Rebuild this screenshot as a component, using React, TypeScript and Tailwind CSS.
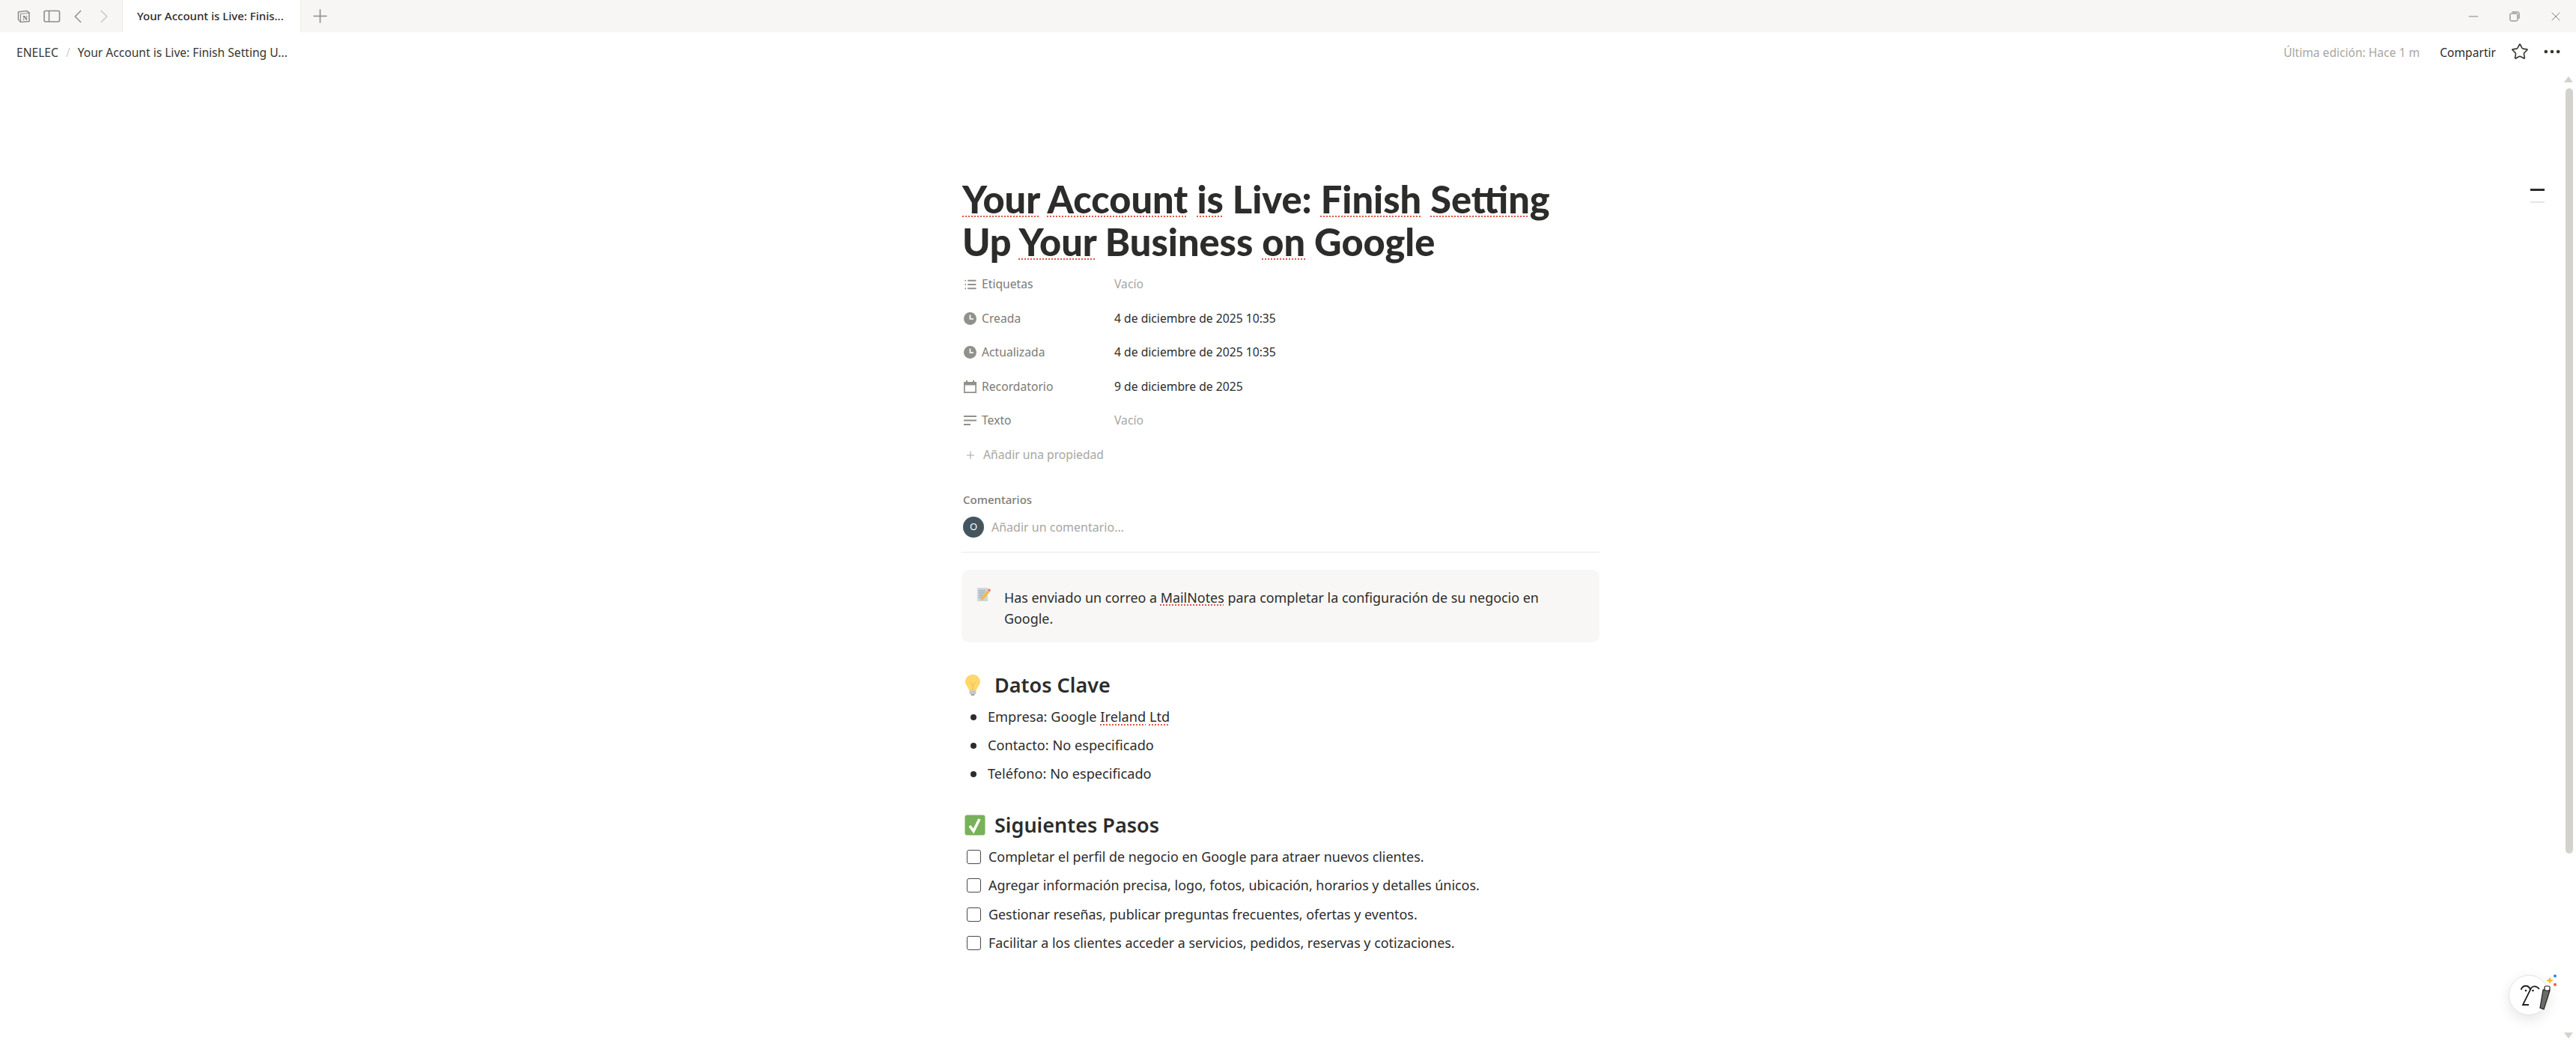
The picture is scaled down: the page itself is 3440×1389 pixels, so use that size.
import { List, Plus, Star, ChevronLeft, ChevronRight, Minus, X, MoreHorizontal } from 'lucide-react';

const font = "font-['Noto_Sans','Open_Sans',sans-serif]";

function Squiggle({ children }: { children: React.ReactNode }) {
  return <span className="underline decoration-dotted decoration-[#e0574a] decoration-2 underline-offset-[3px]">{children}</span>;
}

function ClockFill() {
  return (
    <svg width="17" height="17" viewBox="0 0 17 17">
      <circle cx="8.5" cy="8.5" r="8.5" fill="#91908b" />
      <path d="M8.5 3.5 V9 H13" stroke="#fff" strokeWidth="1.7" fill="none" />
    </svg>
  );
}

function CalendarFill() {
  return (
    <svg width="17" height="17" viewBox="0 0 17 17" fill="#91908b">
      <path d="M0 2 H3 V0 H5 V2 H12 V0 H14 V2 H17 V17 H0 Z M1.7 6.5 V15.3 H15.3 V6.5 Z" fillRule="evenodd" />
    </svg>
  );
}

function TextLines() {
  return (
    <svg width="17" height="14" viewBox="0 0 17 14" fill="#91908b">
      <rect y="0" width="17" height="2" />
      <rect y="5.5" width="17" height="2" />
      <rect y="11" width="9" height="2" />
    </svg>
  );
}

function PropRow({ icon, label, value, empty }: { icon: React.ReactNode; label: string; value: string; empty?: boolean }) {
  return (
    <div className="flex h-[45.6px] items-center">
      <div className="flex w-[204px] items-center text-[15.7px] text-[#7d7a75]">
        <span className="flex w-[27px] items-center pl-[3px] text-[#91908b]">{icon}</span>
        {label}
      </div>
      <div className={`text-[15.7px] ${empty ? 'text-[#a8a6a1]' : 'text-[#2c2c2b]'}`}>{value}</div>
    </div>
  );
}

function Bullet({ children }: { children: React.ReactNode }) {
  return (
    <div className="flex h-[38px] items-center text-[18.2px] text-[#2c2c2b]">
      <span className="ml-[12px] mr-[15px] h-[8px] w-[8px] rounded-full bg-[#2c2c2b]" />
      {children}
    </div>
  );
}

function Todo({ children }: { children: React.ReactNode }) {
  return (
    <div className="flex h-[38.5px] items-center text-[17.9px] text-[#2c2c2b]">
      <span className="ml-[7px] mr-[10px] h-[19px] w-[19px] rounded-[3px] border-[1.5px] border-[#4a4946]" />
      {children}
    </div>
  );
}

function MemoIcon() {
  return (
    <svg width="20" height="20" viewBox="0 0 20 20">
      <rect x="1" y="1" width="14" height="18" fill="#ccd6dd" />
      <path d="M3 5h9M3 8h8M3 11h6M3 14h5" stroke="#8d9aa3" strokeWidth="1" />
      <path d="M6 15 L15 4 L18 6 L9 17 L5.5 18 Z" fill="#f4b942" />
      <path d="M15 4 L16.5 2 L19 4 L18 6 Z" fill="#dd6b6b" />
    </svg>
  );
}

function BulbIcon() {
  return (
    <svg width="22" height="30" viewBox="0 0 22 30">
      <path d="M11 1 C4.5 1 1 6 1 10.5 C1 14 3.5 16 5 19 L6 22 H16 L17 19 C18.5 16 21 14 21 10.5 C21 6 17.5 1 11 1 Z" fill="#ffd76a" />
      <path d="M7 11 L11 15 L15 11 M11 15 V22" stroke="#f1b64a" strokeWidth="1" fill="none" />
      <rect x="6.5" y="22" width="9" height="5" rx="1" fill="#c3c8cc" />
      <rect x="8.5" y="27" width="5" height="2" rx="1" fill="#9aa1a6" />
    </svg>
  );
}

function CheckEmoji() {
  return (
    <svg width="28" height="28" viewBox="0 0 28 28">
      <rect x="0.5" y="0.5" width="27" height="27" rx="3" fill="#78b159" />
      <path d="M7 15 L12 22 L20 6" stroke="#fff" strokeWidth="3.6" fill="none" />
    </svg>
  );
}

function NotionLogo() {
  return (
    <svg width="18" height="18" viewBox="0 0 18 18" fill="none">
      <path d="M1.5 3 L12.5 1.5 L16 4 V15.5 L4.5 16.5 L1.5 13 Z" stroke="#91908b" strokeWidth="1.6" fill="#f7f6f4" />
      <path d="M4.5 5.5 L16 4.5 M4.5 5.5 V16.5" stroke="#91908b" strokeWidth="1.2" />
      <text x="10.4" y="14" textAnchor="middle" fontSize="9" fontWeight="700" fontFamily="'Liberation Serif', serif" fill="#6f6e69">N</text>
    </svg>
  );
}

function HelpBadge() {
  return (
    <div className="absolute bottom-[33px] right-[28px] h-[56px] w-[62px]">
      <div className="absolute bottom-0 left-0 flex h-[54px] w-[54px] items-center justify-center rounded-full border border-[#e4e3e0] bg-white pl-[3px] shadow-[0_6px_18px_rgba(0,0,0,0.1)]">
        <svg width="26" height="30" viewBox="0 0 26 30" fill="none" stroke="#1f1f1f" strokeWidth="1.8">
          <path d="M0.5 8 C3 1 11 1 13 8 L3 28 H11 M13 8 C15 2 21 2 25 7" />
          <circle cx="7" cy="9" r="1.3" fill="#1f1f1f" stroke="none" />
          <circle cx="16.5" cy="9" r="1.3" fill="#1f1f1f" stroke="none" />
        </svg>
      </div>
      <svg className="absolute left-[40px] top-0" width="26" height="50" viewBox="0 0 26 50">
        <path d="M6 22 L2 46 L7 48 L15 23 Z" fill="#6b6b68" stroke="#1f1f1f" strokeWidth="1.2" />
        <rect x="8" y="17" width="7" height="6" rx="2" fill="#fff" stroke="#1f1f1f" strokeWidth="1.2" />
        <path d="M15 5 L16.5 8 L20 9.5 L16.5 11 L15 14 L13.5 11 L10 9.5 L13.5 8 Z" fill="#fbb92d" />
        <circle cx="22" cy="3.5" r="2" fill="#2f80ed" />
        <circle cx="22" cy="15" r="2" fill="#ef5a4c" />
      </svg>
    </div>
  );
}

export default function App() {
  return (
    <div className={`relative flex h-[1389px] w-[3440px] flex-col overflow-hidden bg-white ${font}`}>
      <div className="flex h-[43px] items-stretch bg-[#f7f6f4]">
        <div className="flex w-[163px] items-center">
          <span className="ml-[23px]"><NotionLogo /></span>
          <svg className="ml-[17px]" width="23" height="18" viewBox="0 0 23 18" fill="none" stroke="#8e8d89" strokeWidth="1.6">
            <rect x="1" y="1.5" width="20.5" height="14.5" rx="2" />
            <path d="M7.5 1.5 V16" />
          </svg>
          <ChevronLeft className="ml-[8px] shrink-0 text-[#8e8d89]" size={30} strokeWidth={1.2} />
          <ChevronRight className="ml-[5px] shrink-0 text-[#c9c8c4]" size={30} strokeWidth={1.2} />
        </div>
        <div className="flex w-[239px] items-center border-x border-[#ecebe8] bg-white pl-[19px] text-[15px] font-medium text-[#2c2c2b]">
          Your Account is Live: Finis...
        </div>
        <Plus className="ml-[11px] self-center text-[#8e8d89]" size={29} strokeWidth={1.3} />
        <div className="ml-auto flex items-center text-[#6d6d6a]">
          <Minus size={20} strokeWidth={1} className="mr-[38px]" />
          <svg className="mr-[38px]" width="14" height="14" viewBox="0 0 14 14" fill="none" stroke="#6d6d6a" strokeWidth="1">
            <rect x="1" y="3" width="10" height="10" rx="1.5" />
            <path d="M3.5 1 H11.5 Q13 1 13 2.5 V10" />
          </svg>
          <X size={20} strokeWidth={1} className="mr-[17px]" />
        </div>
      </div>

      <div className="flex h-[55px] items-center text-[15.6px]">
        <span className="ml-[22px] text-[#37352f]">ENELEC</span>
        <span className="mx-[10px] text-[#d3d2ce]">/</span>
        <span className="text-[#37352f]">Your Account is Live: Finish Setting U...</span>
        <span className="ml-auto text-[#a8a6a1]">Última edición: Hace 1 m</span>
        <span className="ml-[27px] text-[#2c2c2b]">Compartir</span>
        <Star className="mb-[3px] ml-[20px] text-[#37352f]" size={24} strokeWidth={1.6} />
        <MoreHorizontal className="mb-[3px] ml-[17px] mr-[18px] text-[#37352f]" size={28} strokeWidth={2} />
      </div>

      <main className="ml-[1284px] w-[852px]">
        <h1 className="mt-[139px] pl-[1px] font-['Lato',sans-serif] text-[50.5px] font-black leading-[57px] text-[#2c2c2b]">
          <Squiggle>Your</Squiggle> <Squiggle>Account</Squiggle> <Squiggle>is</Squiggle> Live: <Squiggle>Finish</Squiggle> <Squiggle>Setting</Squiggle>
          <br />
          Up <Squiggle>Your</Squiggle> Business <Squiggle>on</Squiggle> Google
        </h1>

        <div className="mt-[6px]">
          <PropRow icon={<List size={18} strokeWidth={2.4} />} label="Etiquetas" value="Vacío" empty />
          <PropRow icon={<ClockFill />} label="Creada" value="4 de diciembre de 2025 10:35" />
          <PropRow icon={<ClockFill />} label="Actualizada" value="4 de diciembre de 2025 10:35" />
          <PropRow icon={<CalendarFill />} label="Recordatorio" value="9 de diciembre de 2025" />
          <PropRow icon={<TextLines />} label="Texto" value="Vacío" empty />
          <div className="flex h-[46px] items-center text-[15.7px] text-[#a8a6a1]">
            <Plus size={16} strokeWidth={1.6} className="ml-[4px] mr-[9px]" />
            Añadir una propiedad
          </div>
        </div>

        <div className="mt-[25px] pl-[2px] text-[15px] font-medium text-[#7d7a75]">Comentarios</div>
        <div className="mt-[11.5px] flex items-center border-b border-[#ebeae8] pb-[19px] pl-[2px]">
          <span className="flex h-[28px] w-[28px] items-center justify-center rounded-full bg-[#44555f] text-[13px] text-white">O</span>
          <span className="ml-[10px] text-[16px] text-[#a8a6a1]">Añadir un comentario...</span>
        </div>

        <div className="mt-[23px] flex rounded-[10px] bg-[#f8f7f5] px-[18px] pb-[18px] pt-[23px]">
          <span className="ml-[2px] mr-[17px]"><MemoIcon /></span>
          <p className="text-[17.9px] leading-[28px] text-[#2c2c2b]">
            Has enviado un correo a <Squiggle>MailNotes</Squiggle> para completar la configuración de su negocio en
            <br />
            Google.
          </p>
        </div>

        <h2 className="mt-[35px] flex h-[44px] items-center text-[27px] font-semibold text-[#2c2c2b]">
          <span className="ml-[4px] mr-[18px] flex"><BulbIcon /></span>
          Datos Clave
        </h2>
        <div className="mt-[2px]">
          <Bullet>Empresa: Google&nbsp;<Squiggle>Ireland</Squiggle>&nbsp;<Squiggle>Ltd</Squiggle></Bullet>
          <Bullet>Contacto: No especificado</Bullet>
          <Bullet>Teléfono: No especificado</Bullet>
        </div>

        <h2 className="mt-[27px] flex h-[44px] items-center text-[27px] font-semibold text-[#2c2c2b]">
          <span className="ml-[4px] mr-[12px] flex"><CheckEmoji /></span>
          Siguientes Pasos
        </h2>
        <div className="mt-[1px]">
          <Todo>Completar el perfil de negocio en Google para atraer nuevos clientes.</Todo>
          <Todo>Agregar información precisa, logo, fotos, ubicación, horarios y detalles únicos.</Todo>
          <Todo>Gestionar reseñas, publicar preguntas frecuentes, ofertas y eventos.</Todo>
          <Todo>Facilitar a los clientes acceder a servicios, pedidos, reservas y cotizaciones.</Todo>
        </div>
      </main>

      {/* outline ticks */}
      <div className="absolute right-[42px] top-[252px] flex flex-col gap-[14px]">
        <span className="h-[3px] w-[19px] bg-[#2c2c2b]" />
        <span className="h-[2px] w-[19px] bg-[#e6e5e2]" />
      </div>

      {/* scrollbar */}
      <div className="absolute right-[4px] top-[102px] h-0 w-0 border-x-[6px] border-b-[8px] border-x-transparent border-b-[#d3d2cc]" />
      <div className="absolute right-[4px] top-[118px] h-[1022px] w-[10px] rounded-full bg-[#d3d2cc]" />
      <div className="absolute bottom-[2px] right-[4px] h-0 w-0 border-x-[6px] border-t-[8px] border-x-transparent border-t-[#d3d2cc]" />

      <HelpBadge />
    </div>
  );
}
